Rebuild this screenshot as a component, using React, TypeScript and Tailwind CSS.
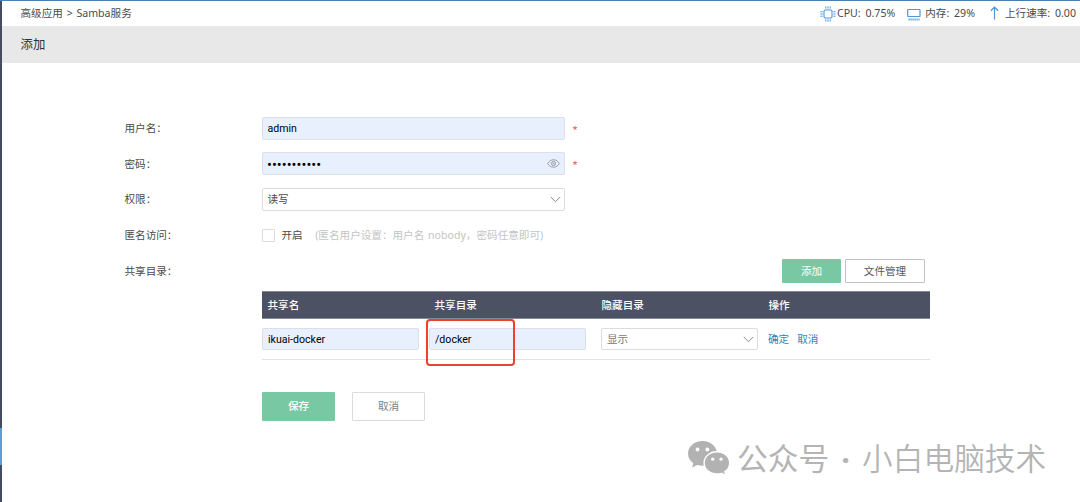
import { useState } from "react";
import type { ReactNode } from "react";

const columns = ["共享名", "共享目录", "隐藏目录", "操作"];

function CpuIcon() {
    return (
        <svg width="16" height="16" viewBox="0 0 16 16" fill="none" stroke="#4f97d6">
            <rect x="4" y="4" width="8" height="8" rx="1.2" strokeWidth="1.1" />
            <path d="M5.8 .4v2.2M8 .4v2.2M10.2 .4v2.2M5.8 13.4v2.2M8 13.4v2.2M10.2 13.4v2.2M.4 5.8h2.2M.4 8h2.2M.4 10.2h2.2M13.4 5.8h2.2M13.4 8h2.2M13.4 10.2h2.2" strokeWidth="1" />
        </svg>
    );
}

function MemoryIcon() {
    return (
        <svg width="14" height="13" viewBox="0 0 14 13" fill="none" stroke="#4f97d6">
            <rect x=".7" y="1.5" width="12.3" height="7" rx=".6" strokeWidth="1.2" />
            <path d="M1.5 11.5h11" strokeWidth="2" strokeDasharray="1.2 .8" />
        </svg>
    );
}

function UpIcon() {
    return (
        <svg width="9" height="14" viewBox="0 0 9 14" fill="none" stroke="#4f97d6" strokeWidth="1.2">
            <path d="M4.5 13.5V1.2M.8 4.8l3.7-3.6 3.7 3.6" />
        </svg>
    );
}

function Chevron() {
    return (
        <svg className="shrink-0" width="11" height="7" viewBox="0 0 11 7" fill="none" stroke="#888" strokeWidth="1">
            <path d="M.8 1l4.7 4.7L10.2 1" />
        </svg>
    );
}

function EyeIcon() {
    return (
        <svg className="shrink-0" width="13" height="9" viewBox="0 0 13 9" fill="none" stroke="#9a9ea8" strokeWidth="1">
            <path d="M.7 4.5C2 2 4 .8 6.5 .8S11 2 12.3 4.5C11 7 9 8.2 6.5 8.2S2 7 .7 4.5z" />
            <circle cx="6.5" cy="4.5" r="2.1" />
            <circle cx="6.5" cy="4.5" r=".5" />
        </svg>
    );
}

function WechatIcon() {
    return (
        <svg className="shrink-0" width="43" height="36" viewBox="0 0 43 36">
            <path fill="#b2b2b2" d="M15.5 1C7.3 1 1 6.5 1 13.5c0 4 2 7.4 5.3 9.7L5 27.5l5.2-2.6c1.7.5 3.5.8 5.3.8C23.7 25.7 30 20.3 30 13.5S23.7 1 15.5 1z" />
            <path fill="#b2b2b2" stroke="#fff" strokeWidth="1.4" d="M30 11.7c-7.3 0-12.9 4.9-12.9 11.2S22.7 34 30 34c1.6 0 3.1-.3 4.5-.7l4.5 2.3-1.2-4C41 29.6 42.7 26.5 42.7 22.9c0-6.3-5.5-11.2-12.7-11.2z" />
            <circle cx="10.5" cy="9.5" r="1.9" fill="#fff" />
            <circle cx="20.3" cy="9.5" r="1.9" fill="#fff" />
            <circle cx="25.7" cy="19.2" r="1.6" fill="#fff" />
            <circle cx="34" cy="19.2" r="1.6" fill="#fff" />
        </svg>
    );
}

function Required() {
    return <span className="mt-[5px] ml-[7px] font-['Noto_Sans_CJK_SC'] text-[13px] text-[#ee6b6b]">*</span>;
}

function Row({ label, children }: { label: string; children?: ReactNode }) {
    return (
        <div className="flex h-[23px] items-center">
            <div className="w-[137.5px] shrink-0">{label}</div>
            {children}
        </div>
    );
}

export default function App() {
    const [user, setUser] = useState("admin");
    const [password, setPassword] = useState("12345678901");
    const [anonymous, setAnonymous] = useState(false);

    return (
        <div className="relative flex h-[502px] w-[1080px] overflow-hidden border-t border-[#4a7fb5] bg-white font-['Noto_Sans','Noto_Sans_CJK_SC',sans-serif] text-[10.6px] leading-4 text-[#4a4a4a]">
            {/* край бокового меню */}
            <div className="flex w-[2px] shrink-0 flex-col bg-[#454c5f] pt-[427px]">
                <div className="h-[37px] bg-[#5b9be0]" />
            </div>

            <main className="min-w-0 flex-1">
                <header className="flex h-[25px] items-center justify-between pr-[4px] pb-px pl-[18.5px]">
                    <div className="whitespace-pre [word-spacing:1px]">高级应用 &gt; Samba服务</div>
                    <div className="flex items-center whitespace-nowrap [word-spacing:2px]">
                        <span className="mt-[2px]"><CpuIcon /></span>
                        <span className="ml-[1.5px]">CPU: 0.75%</span>
                        <span className="mt-[2px] ml-[12px]"><MemoryIcon /></span>
                        <span className="ml-[4px]">内存: 29%</span>
                        <span className="ml-[15px]"><UpIcon /></span>
                        <span className="ml-[6px]">上行速率: 0.00</span>
                    </div>
                </header>
                <h1 className="flex h-[37px] items-center bg-[#e8e8e8] pl-[18.5px] text-[12.4px] text-[#333]">添加</h1>

                <form className="ml-[122.5px] flex w-[805.5px] flex-col gap-[12.7px] pt-[53.5px]">
                    <Row label="用户名：">
                        <input
                            value={user}
                            onChange={(e) => setUser(e.target.value)}
                            className="h-[23px] w-[303px] rounded-[2px] border border-[#dcdfe6] bg-[#e8effd] px-[4.5px] font-['Roboto'] text-black"
                        />
                        <Required />
                    </Row>
                    <Row label="密码：">
                        <div className="flex h-[23px] w-[303px] items-center rounded-[2px] border border-[#dcdfe6] bg-[#e8effd] px-[4px]">
                            <input
                                type="password"
                                value={password}
                                onChange={(e) => setPassword(e.target.value)}
                                className="h-[21px] min-w-0 flex-1 pt-[2px] font-['Roboto'] text-[14.6px] text-black outline-none"
                            />
                            <EyeIcon />
                        </div>
                        <Required />
                    </Row>
                    <Row label="权限：">
                        <div className="flex h-[23px] w-[303px] items-center justify-between rounded-[2px] border border-[#dcdcdc] pr-[3px] pl-[4.5px]">
                            读写
                            <Chevron />
                        </div>
                    </Row>
                    <Row label="匿名访问：">
                        <button
                            type="button"
                            onClick={() => setAnonymous(!anonymous)}
                            className="size-[13px] rounded-[1px] border border-[#dcdcdc]"
                        >
                            {anonymous && <span className="block size-full bg-[#79c8a4]" />}
                        </button>
                        <span className="ml-[6.5px]">开启</span>
                        <span className="ml-[12.5px] text-[#c4c4c4] [word-spacing:1px]">(匿名用户设置：用户名 nobody，密码任意即可)</span>
                    </Row>
                    <Row label="共享目录：">
                        <div className="flex flex-1 justify-end gap-[4px] pr-[5px]">
                            <button type="button" className="h-[24px] w-[59px] rounded-[1px] bg-[#79c8a4] text-white">添加</button>
                            <button type="button" className="h-[24px] w-[80px] rounded-[1px] border border-[#bfc1c5] text-[#555b66]">文件管理</button>
                        </div>
                    </Row>

                    <div className="-mt-[3.5px] ml-[137.5px] w-[668px]">
                        <div className="grid h-[28px] grid-cols-4 items-center border-y border-[#858997] bg-[#4d5164] font-medium text-white">
                            {columns.map((c) => (
                                <div key={c} className="pl-[5.5px]">{c}</div>
                            ))}
                        </div>
                        <div className="relative grid h-[41px] grid-cols-4 items-center border-b border-[#e2e2e2]">
                            <input
                                defaultValue="ikuai-docker"
                                className="h-[22px] w-[157px] rounded-[2px] border border-[#dcdfe6] bg-[#e8effd] px-[5px] font-['Roboto'] text-black"
                            />
                            <input
                                defaultValue="/docker"
                                className="h-[22px] w-[157px] rounded-[2px] border border-[#dcdfe6] bg-[#e8effd] px-[5px] font-['Roboto'] text-black"
                            />
                            <div className="ml-[5px] flex h-[22px] w-[157px] items-center justify-between rounded-[2px] border border-[#dcdcdc] pr-[3px] pl-[5px] text-[#777]">
                                显示
                                <Chevron />
                            </div>
                            <div className="flex gap-[8px] pl-[5px] text-[#337fc0]">
                                <a>确定</a>
                                <a>取消</a>
                            </div>
                            {/* выделение пути */}
                            <div className="absolute top-0 left-[164px] h-[47px] w-[89px] rounded-[4px] border-2 border-[#ea4329]" />
                        </div>
                    </div>

                    <div className="mt-[18.5px] ml-[137.5px] flex gap-[17px]">
                        <button type="button" className="h-[29px] w-[73px] rounded-[1px] bg-[#79c8a4] font-medium text-white">保存</button>
                        <button type="button" className="h-[29px] w-[73px] rounded-[1px] border border-[#dcdcdc] text-[#7a8088]">取消</button>
                    </div>
                </form>
            </main>

            {/* подпись поверх страницы */}
            <div className="absolute top-[436px] left-[687px] flex items-center whitespace-nowrap font-['Noto_Sans_CJK_SC',sans-serif] text-[30.7px] leading-[36px] text-[#b4b4b4]">
                <span className="mt-[2px]"><WechatIcon /></span>
                <span className="ml-[7px]">公众号</span>
                <span className="mt-[4px] w-[33px] text-center font-['Noto_Sans'] font-bold">·</span>
                <span className="font-[350]">小白电脑技术</span>
            </div>
        </div>
    );
}
